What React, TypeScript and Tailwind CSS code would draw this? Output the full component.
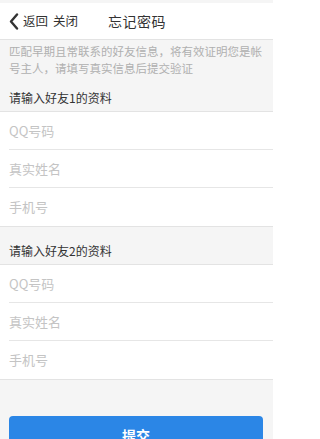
import React from 'react'

const font = { fontFamily: '"Noto Sans CJK SC", "Noto Sans", sans-serif' }

function Row({ placeholder, last }: { placeholder: string; last?: boolean }) {
  return (
    <div className="pl-[9px]">
      <div className={`h-[38px] flex items-center ${last ? '' : 'border-b border-[#e6e6e6]'}`}>
        <input
          placeholder={placeholder}
          className="w-full bg-transparent outline-none text-[13px] placeholder:text-[#c4c4c4] text-[#333]"
        />
      </div>
    </div>
  )
}

function FriendForm() {
  return (
    <div className="bg-white border-y border-[#e3e3e3]">
      <Row placeholder="QQ号码" />
      <Row placeholder="真实姓名" />
      <Row placeholder="手机号" last />
    </div>
  )
}

export default function App() {
  return (
    <div style={font} className="w-[273px] h-[439px] overflow-hidden bg-[#f5f5f5] pt-[3px]">
      {/* Header */}
      <div className="h-[37px] bg-white border-b border-[#e3e3e3] flex items-center relative">
        <div className="flex items-center pl-[9px] text-[12.5px] text-[#333]">
          <svg width="10" height="17" viewBox="0 0 10 17" className="mr-[4px]">
            <path d="M8 1.5 L2 8.5 L8 15.5" fill="none" stroke="#333" strokeWidth="2.4" strokeLinecap="round" strokeLinejoin="round" />
          </svg>
          <span>返回</span>
          <span className="ml-[5px]">关闭</span>
        </div>
        <div className="absolute left-[108px] text-[14px] text-[#333] tracking-[0.5px]">忘记密码</div>
      </div>

      {/* Description */}
      <div className="px-[9px] pt-[3px] text-[11.5px] leading-[17px] text-[#b0b0b0]">
        匹配早期且常联系的好友信息，将有效证明您是帐号主人，请填写真实信息后提交验证
      </div>

      <div className="h-[34px] flex items-end pb-[5px] px-[9px] text-[12px] leading-[16px] text-[#333]">
        请输入好友1的资料
      </div>
      <FriendForm />

      <div className="h-[37px] flex items-end pb-[5px] px-[9px] text-[12px] leading-[16px] text-[#333]">
        请输入好友2的资料
      </div>
      <FriendForm />

      <div className="px-[9px] pr-[10px] mt-[36px]">
        <button className="w-full h-[38px] rounded-[4px] bg-[#2b86e6] text-white text-[14px] font-bold">
          提交
        </button>
      </div>
    </div>
  )
}
